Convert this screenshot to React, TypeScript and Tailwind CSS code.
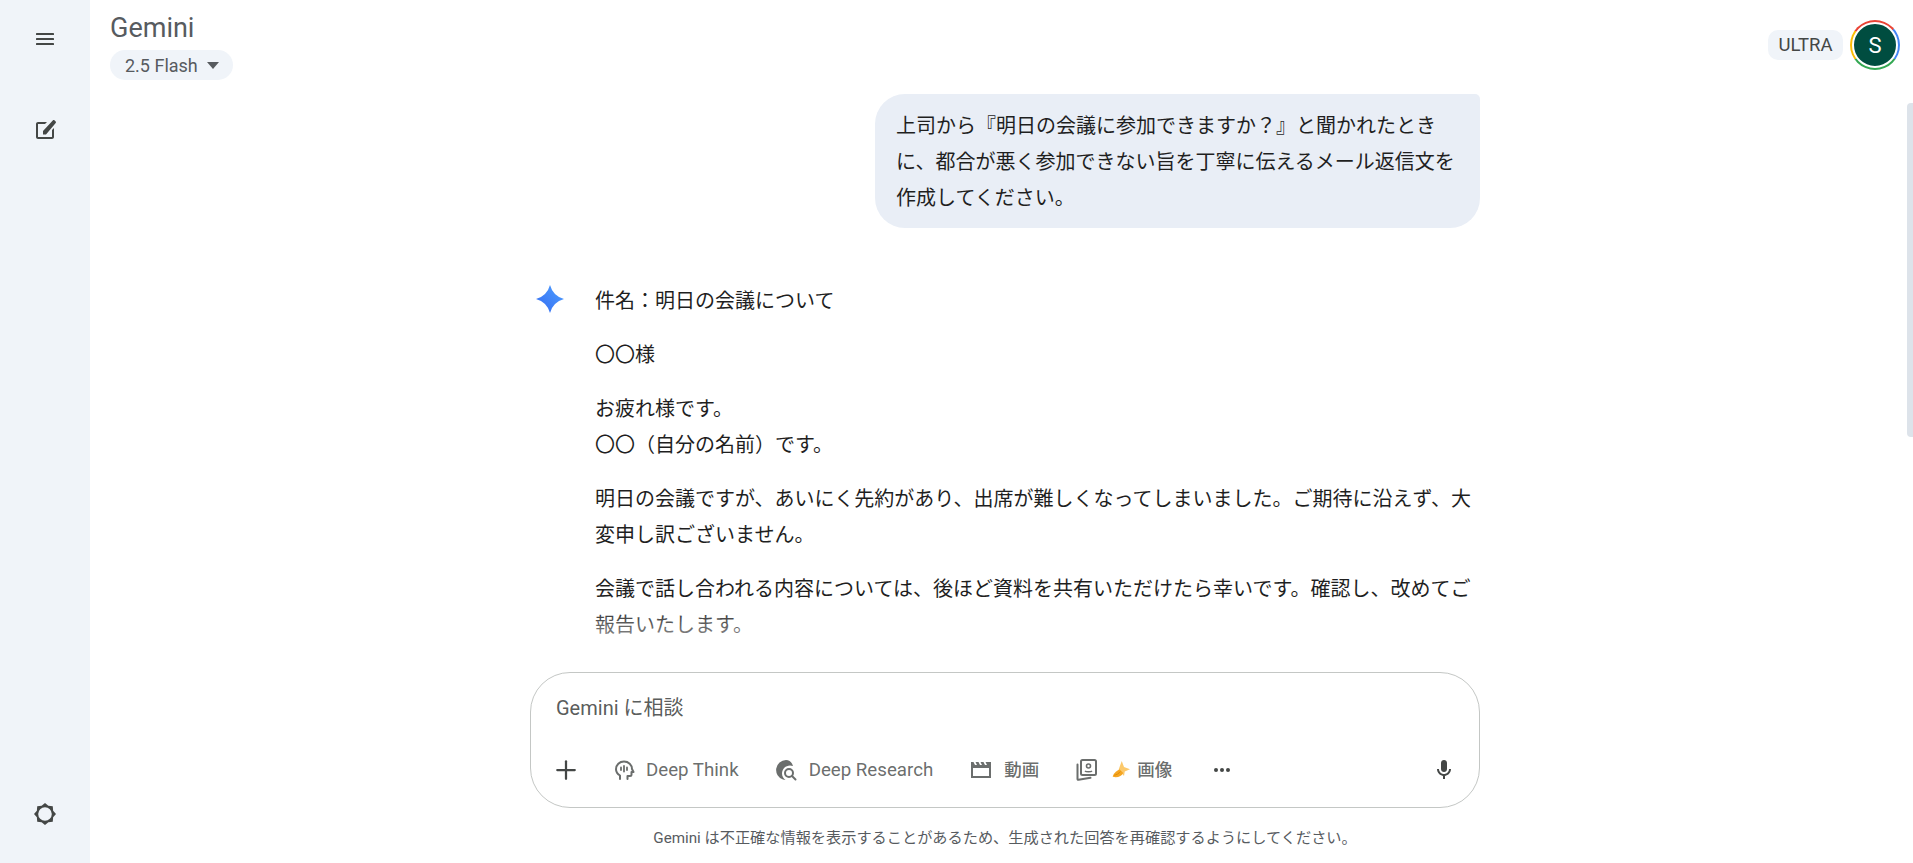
import type { ReactNode } from "react";
import { Plus } from "lucide-react";

const cjk = "font-['Roboto','Noto_Sans_CJK_JP',sans-serif]";
const toolGray = "#6b6e6d";

const Star = () => (
  <svg width="30" height="30" viewBox="0 0 30 30">
    <defs>
      <linearGradient id="star" x1="0" y1="1" x2="1" y2="0">
        <stop offset="0" stopColor="#346bf1" />
        <stop offset="1" stopColor="#4fa0ff" />
      </linearGradient>
    </defs>
    <path d="M15 1Q18 12 29 15Q18 18 15 29Q12 18 1 15Q12 12 15 1Z" fill="url(#star)" />
  </svg>
);

const MenuIcon = () => (
  <svg width="24" height="24" viewBox="0 0 24 24" fill="#444746">
    <rect x="3" y="5.9" width="18" height="2.2" rx="0.6" />
    <rect x="3" y="10.9" width="18" height="2.2" rx="0.6" />
    <rect x="3" y="15.9" width="18" height="2.2" rx="0.6" />
  </svg>
);

const EditIcon = () => (
  <svg width="24" height="24" viewBox="0 0 24 24" fill="#444746">
    <path d="M5 22c-1.100 0-2-.9-2-2V7c0-1.100.9-2 2-2h9l-2 2H5v13h14v-7l2-2v9c0 1.100-.9 2-2 2H5z" />
    <path d="M10 17.500v-3.400L20 3.300c.4-.4 1-.4 1.400 0l1.300 1.300c.4.4.4 1 0 1.400L13 17.500h-3z" />
  </svg>
);

const GearIcon = () => (
  <svg width="24" height="24" viewBox="0 0 24 24" fill="#444746">
    <path
      fillRule="evenodd"
      d="M12 1L15.37 3.870 19.780 4.220 20.130 8.630 23 12 20.130 15.370 19.780 19.780 15.370 20.130 12 23 8.630 20.130 4.220 19.780 3.870 15.370 1 12 3.870 8.630 4.220 4.220 8.630 3.870ZM12 5.200a6.800 6.800 0 1 0 0 13.600 6.800 6.800 0 0 0 0-13.600z"
    />
  </svg>
);

const DeepThinkIcon = () => (
  <svg width="24" height="24" viewBox="0 0 24 24" fill="none" stroke={toolGray} strokeWidth="2" strokeLinecap="round" strokeLinejoin="round">
    <path d="M8 21v-3.500C5.500 16 4 13.800 4 11.200 4 6.800 7.500 3.500 12 3.500s8 3.300 8 7.500l1.500 3H19.500v2.500c0 1-.8 1.500-1.500 1.500h-2.500V21" />
    <path d="M9 9.500v2.500M12 8v5.500M15 9.500v2.500" strokeWidth="1.800" />
  </svg>
);

const DeepResearchIcon = () => (
  <svg width="24" height="24" viewBox="0 0 24 24" fill="none">
    <path
      d="M12 2a10 10 0 0 0-3 19.500c.6.200 1.500.400 2.500.500-2-1.500-3.500-3.800-3.500-6.500 0-4.400 3.600-8 8-8 .8 0 2 .2 3 .600C18 4.300 15.300 2 12 2z"
      fill={toolGray}
    />
    <circle cx="15" cy="15" r="4" stroke={toolGray} strokeWidth="2" />
    <path d="M18 18l3.500 3.500" stroke={toolGray} strokeWidth="2" strokeLinecap="round" />
  </svg>
);

const VideoIcon = () => (
  <svg width="24" height="24" viewBox="0 0 24 24" fill={toolGray}>
    <path d="M2 4h2.500l1.500 3h2L6.500 4h3L11 7h2l-1.500-3h3L16 7h2l-1.500-3H22v16H2V4zm2 6v8h16v-8H4z" />
  </svg>
);

const ImageIcon = () => (
  <svg width="24" height="24" viewBox="0 0 24 24" fill="none" stroke={toolGray} strokeWidth="2" strokeLinejoin="round">
    <rect x="7" y="2" width="15" height="15" rx="1.500" />
    <path d="M3.500 6.500V21c0 .5.400.9 1 .8l12-2" strokeLinecap="round" />
    <circle cx="14.500" cy="8" r="2" strokeWidth="1.600" />
    <path d="M11 13c1 1 6 1 7 0" strokeWidth="1.600" />
  </svg>
);

const BananaIcon = () => (
  <svg width="18" height="18" viewBox="0 0 24 24">
    <path d="M13 0l3 8 8 3-7 3-1 6-7-9z" fill="#fcc96b" />
    <path d="M1 21c0-2 3-7 9-10l5 5c-2 4-8 7-14 5z" fill="#f5a623" />
    <path d="M3 19c3-.5 6-2 8-5" fill="none" stroke="#e08a00" strokeWidth="1.200" />
  </svg>
);

const MicIcon = () => (
  <svg width="24" height="24" viewBox="0 0 24 24" fill="#444746">
    <path d="M12 14c-1.700 0-3-1.300-3-3V5c0-1.700 1.300-3 3-3s3 1.300 3 3v6c0 1.700-1.300 3-3 3z" />
    <path d="M11 21v-3.100C7.600 17.400 5 14.500 5 11h2c0 2.800 2.200 5 5 5s5-2.200 5-5h2c0 3.500-2.600 6.400-6 6.900V21h-2z" />
  </svg>
);

const Label = ({ children, className }: { children: ReactNode; className: string }) => (
  <span className={`text-[#444746]/80 ${className}`}>{children}</span>
);

const App = () => {
  return (
    <div className={`flex h-[863px] w-full overflow-hidden bg-white ${cjk}`}>
      <aside className="flex w-[90px] shrink-0 flex-col items-center bg-[#f0f4f9] pt-[27px] pb-[37px]">
        <MenuIcon />
        <div className="mt-[66px]"><EditIcon /></div>
        <div className="mt-auto"><GearIcon /></div>
      </aside>

      <main className="relative flex min-w-0 flex-1 flex-col">
        <header className="relative flex h-[94px] shrink-0 justify-between pl-[20px] pr-[13px]">
          <div className="flex flex-col items-start">
            <div className="mt-[10px] text-[27px] leading-[36px] text-[#575b5f]">Gemini</div>
            <div className="mt-[4px] flex h-[30px] items-center gap-[9px] rounded-full bg-[#f0f4f9] pl-[15px] pr-[14px] text-[18px] text-[#575b5f]">
              2.5 Flash
              <svg width="12" height="7" viewBox="0 0 12 7" fill="#575b5f"><path d="M0 0h12L6 7z" /></svg>
            </div>
          </div>
          <div className="mt-[20px] flex h-[50px] items-center gap-[7px]">
            <div className="flex h-[30px] w-[75px] items-center justify-center rounded-[10px] bg-[#f0f4f9] pt-[1px] text-[18.500px] text-[#444746]">
              ULTRA
            </div>
            <div className="flex h-[50px] w-[50px] items-center justify-center rounded-full bg-[conic-gradient(#ea4335_0deg_50deg,#4285f4_50deg_125deg,#34a853_125deg_235deg,#fbbc04_235deg_305deg,#ea4335_305deg_360deg)]">
              <div className="flex h-[46px] w-[46px] items-center justify-center rounded-full border-2 border-white bg-[#004d40] text-[22px] text-white">
                S
              </div>
            </div>
          </div>
        </header>

        <div className="flex flex-1 flex-col items-center pl-[7px]">
          <div className="flex w-[950px] flex-col">
            <div className="flex justify-end">
              <div className="w-[605px] rounded-[30px] rounded-tr-[5px] bg-[#e9eef6] px-[21px] pt-[14px] pb-[12px] text-[20px] leading-[36px] text-[#1f1f1f]">
                上司から『明日の会議に参加できますか？』と聞かれたときに、都合が悪く参加できない旨を丁寧に伝えるメール返信文を作成してください。
              </div>
            </div>

            <div className="mt-[55px] flex">
              <div className="ml-[5px] w-[60px] shrink-0 pt-[1px]"><Star /></div>
              <div className="w-[885px] text-[20px] leading-[36px] text-[#1f1f1f]">
                <p>件名：明日の会議について</p>
                <p className="mt-[18px]">〇〇様</p>
                <p className="mt-[18px]">お疲れ様です。<br />〇〇（自分の名前）です。</p>
                <p className="mt-[18px]">明日の会議ですが、あいにく先約があり、出席が難しくなってしまいました。ご期待に沿えず、大変申し訳ございません。</p>
                <p className="mt-[18px]">会議で話し合われる内容については、後ほど資料を共有いただけたら幸いです。確認し、改めてご報告いたします。</p>
              </div>
            </div>
          </div>
        </div>

        {/* fade + input pinned over the scrolled conversation */}
        <div className="absolute inset-x-0 bottom-0 flex flex-col items-center pl-[7px]">
          <div className="h-[60px] w-full bg-gradient-to-b from-white/10 to-white" />
          <div className="flex w-full flex-col items-center bg-white">
            <div className="flex h-[136px] w-[950px] flex-col rounded-[40px] border border-[#c4c7c5] bg-white pl-[20px] pr-[23px]">
              <div className="mt-[20px] pl-[5px] text-[20px] leading-[30px] text-[#444746]/90">Gemini に相談</div>
              <div className="mt-[32px] flex h-[30px] items-center">
                <Plus size={30} color="#444746" strokeWidth={1.8} />
                <span className="ml-[31px]"><DeepThinkIcon /></span>
                <Label className="ml-[10px] text-[18.700px]">Deep Think</Label>
                <span className="ml-[35px]"><DeepResearchIcon /></span>
                <Label className="ml-[11px] text-[18.700px]">Deep Research</Label>
                <span className="ml-[36px]"><VideoIcon /></span>
                <Label className="ml-[11px] text-[17.500px] font-medium">動画</Label>
                <span className="ml-[35px]"><ImageIcon /></span>
                <span className="ml-[14px]"><BananaIcon /></span>
                <Label className="ml-[7px] text-[17.500px] font-medium">画像</Label>
                <div className="ml-[42px] flex gap-[2px]">
                  <span className="h-[4px] w-[4px] rounded-full bg-[#444746]" />
                  <span className="h-[4px] w-[4px] rounded-full bg-[#444746]" />
                  <span className="h-[4px] w-[4px] rounded-full bg-[#444746]" />
                </div>
                <div className="ml-auto"><MicIcon /></div>
              </div>
            </div>
            <div className="flex h-[55px] items-center pt-[6px] text-[15.200px] text-[#575b5f]">
              Gemini は不正確な情報を表示することがあるため、生成された回答を再確認するようにしてください。
            </div>
          </div>
        </div>

        <div className="absolute right-0 top-[103px] h-[334px] w-[6px] rounded-l-[4px] bg-[#dde3ea]" />
      </main>
    </div>
  );
};

export default App;
